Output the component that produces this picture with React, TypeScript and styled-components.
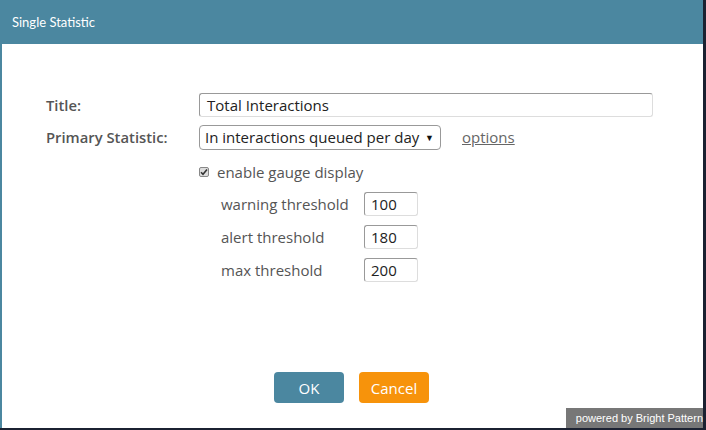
import React from "react";
import styled, { createGlobalStyle } from "styled-components";

const Global = createGlobalStyle`
  html, body { margin: 0; padding: 0; background: #1b2131; }
  body { width: 706px; height: 430px; overflow: hidden; font-family: "Open Sans", Lato, sans-serif; }
`;

const Dialog = styled.div`
  position: relative;
  width: 701px;
  height: 428px;
  background: #fff;
  border-left: 2px solid #4b87a0;
  display: flex;
  flex-direction: column;
`;

const Header = styled.div`
  height: 44px;
  background: #4b87a0;
  color: #fff;
  font-family: Lato, sans-serif;
  font-size: 13px;
  display: flex;
  align-items: center;
  padding-left: 10px;
  padding-bottom: 1px;
  box-sizing: border-box;
`;

const Body = styled.div`
  flex: 1;
  padding: 49px 0 0 44px;
  display: flex;
  flex-direction: column;
`;

const FieldRow = styled.div<{ gap?: number }>`
  display: flex;
  align-items: center;
  height: 24px;
  margin-bottom: ${(p) => p.gap ?? 0}px;
`;

const Label = styled.div`
  width: 153px;
  font-size: 14.8px;
  font-weight: 600;
  color: #555;
`;

const TextInput = styled.div`
  width: 454px;
  height: 24px;
  box-sizing: border-box;
  border: 1px solid #ddd;
  border-top-color: #999;
  border-left-color: #999;
  border-radius: 3px;
  padding-left: 7px;
  display: flex;
  align-items: center;
  font-size: 15px;
  color: #222;
`;

const Select = styled.div`
  width: 242px;
  height: 25px;
  box-sizing: border-box;
  border: 1px solid #999;
  border-radius: 4px;
  padding: 0 6px 0 5px;
  display: flex;
  align-items: center;
  justify-content: space-between;
  font-size: 15px;
  color: #222;
  white-space: nowrap;
`;

const Caret = styled.span`
  font-size: 9px;
  color: #111;
`;

const Link = styled.span`
  margin-left: 21px;
  font-size: 15px;
  color: #666;
  text-decoration: underline;
`;

const Gauge = styled.div`
  margin-left: 153px;
  margin-top: 15px;
  display: flex;
  flex-direction: column;
`;

const CheckRow = styled.div`
  display: flex;
  align-items: center;
  gap: 8px;
  font-size: 15px;
  color: #555;
  height: 16px;
`;

const Box = styled.span`
  width: 10px;
  height: 10px;
  box-sizing: border-box;
  border: 1px solid #888;
  border-radius: 2px;
  background: #ddd;
  display: flex;
  align-items: center;
  justify-content: center;
`;

const Thresholds = styled.div`
  margin-left: 22px;
  margin-top: 12px;
  display: grid;
  grid-template-columns: 143px 54px;
  row-gap: 9px;
  align-items: center;
`;

const TLabel = styled.div`
  font-size: 15px;
  color: #555;
`;

const NumInput = styled.div`
  width: 54px;
  height: 24px;
  box-sizing: border-box;
  border: 1px solid #ddd;
  border-top-color: #999;
  border-left-color: #999;
  border-radius: 3px;
  padding-left: 6px;
  display: flex;
  align-items: center;
  font-size: 15px;
  color: #222;
`;

const Footer = styled.div`
  display: flex;
  justify-content: center;
  gap: 15px;
  padding: 0 2px 25px 0;
`;

const Button = styled.button<{ tone: string }>`
  width: 70px;
  height: 31px;
  border: none;
  border-radius: 4px;
  background: ${(p) => p.tone};
  color: #fff;
  font-family: "Open Sans", Lato, sans-serif;
  font-size: 15px;
  padding: 0;
`;

const Badge = styled.div`
  position: absolute;
  right: 0;
  bottom: 0;
  width: 137px;
  height: 20px;
  background: #777;
  color: #fff;
  font-family: "Liberation Sans", Arial, sans-serif;
  font-size: 11px;
  display: flex;
  align-items: center;
  justify-content: flex-end;
  box-sizing: border-box;
  white-space: nowrap;
`;

export default function App() {
  return (
    <>
      <Global />
      <Dialog>
        <Header>Single Statistic</Header>
        <Body>
          <FieldRow gap={8}>
            <Label>Title:</Label>
            <TextInput>Total Interactions</TextInput>
          </FieldRow>
          <FieldRow>
            <Label>Primary Statistic:</Label>
            <Select>
              <span>In interactions queued per day</span>
              <Caret>▼</Caret>
            </Select>
            <Link>options</Link>
          </FieldRow>
          <Gauge>
            <CheckRow>
              <Box>
                <svg width="8" height="8" viewBox="0 0 8 8">
                  <path d="M1 4.2 L3 6.2 L7 1.5" fill="none" stroke="#333" strokeWidth="1.6" />
                </svg>
              </Box>
              enable gauge display
            </CheckRow>
            <Thresholds>
              <TLabel>warning threshold</TLabel>
              <NumInput>100</NumInput>
              <TLabel>alert threshold</TLabel>
              <NumInput>180</NumInput>
              <TLabel>max threshold</TLabel>
              <NumInput>200</NumInput>
            </Thresholds>
          </Gauge>
          <div style={{ flex: 1 }} />
        </Body>
        <Footer>
          <Button tone="#4b87a0">OK</Button>
          <Button tone="#f7930b">Cancel</Button>
        </Footer>
        <Badge>powered by Bright Pattern</Badge>
      </Dialog>
    </>
  );
}
